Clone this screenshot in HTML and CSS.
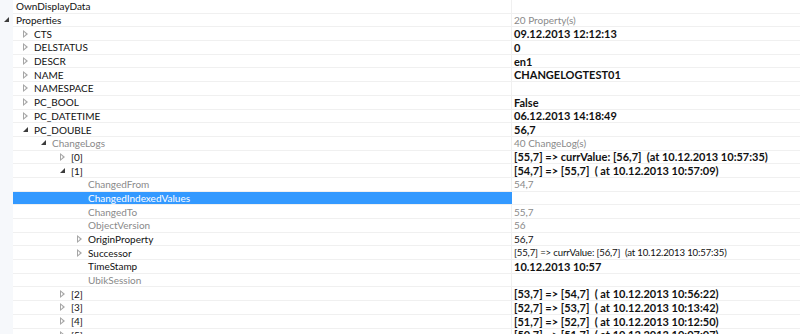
FILE: index.html
```html
<!DOCTYPE html>
<html lang="de">
<head>
  <meta charset="UTF-8">
  <title>OwnDisplayData</title>
  <link rel="stylesheet" href="styles.css">
</head>
<body>
  <div class="grid-view">
    <!-- linke Randspalte -->
    <div class="gutter"></div>

    <div class="rows">
      <div class="row lvl0"><div class="name"><span class="exp"></span>OwnDisplayData</div><div class="val"></div></div>
      <div class="row lvl0"><div class="name"><span class="exp open"></span>Properties</div><div class="val muted small">20 Property(s)</div></div>
      <div class="row lvl1"><div class="name"><span class="exp closed"></span>CTS</div><div class="val strong">09.12.2013 12:12:13</div></div>
      <div class="row lvl1"><div class="name"><span class="exp closed"></span>DELSTATUS</div><div class="val strong">0</div></div>
      <div class="row lvl1"><div class="name"><span class="exp closed"></span>DESCR</div><div class="val strong">en1</div></div>
      <div class="row lvl1"><div class="name"><span class="exp closed"></span>NAME</div><div class="val strong">CHANGELOGTEST01</div></div>
      <div class="row lvl1"><div class="name"><span class="exp closed"></span>NAMESPACE</div><div class="val"></div></div>
      <div class="row lvl1"><div class="name"><span class="exp closed"></span>PC_BOOL</div><div class="val strong">False</div></div>
      <div class="row lvl1"><div class="name"><span class="exp closed"></span>PC_DATETIME</div><div class="val strong">06.12.2013 14:18:49</div></div>
      <div class="row lvl1"><div class="name"><span class="exp open"></span>PC_DOUBLE</div><div class="val strong">56,7</div></div>
      <div class="row lvl2"><div class="name muted"><span class="exp open"></span>ChangeLogs</div><div class="val muted small">40 ChangeLog(s)</div></div>
      <div class="row lvl3"><div class="name"><span class="exp closed"></span>[0]</div><div class="val strong">[55,7] =&gt; currValue: [56,7]&nbsp; (at 10.12.2013 10:57:35)</div></div>
      <div class="row lvl3"><div class="name"><span class="exp open"></span>[1]</div><div class="val strong">[54,7] =&gt; [55,7]&nbsp; ( at 10.12.2013 10:57:09)</div></div>
      <div class="row lvl4"><div class="name muted"><span class="exp"></span>ChangedFrom</div><div class="val muted small">54,7</div></div>
      <div class="row lvl4 selected"><div class="name"><span class="exp"></span>ChangedIndexedValues</div><div class="val"></div></div>
      <div class="row lvl4"><div class="name muted"><span class="exp"></span>ChangedTo</div><div class="val muted small">55,7</div></div>
      <div class="row lvl4"><div class="name muted"><span class="exp"></span>ObjectVersion</div><div class="val muted small">56</div></div>
      <div class="row lvl4"><div class="name"><span class="exp closed"></span>OriginProperty</div><div class="val small">56,7</div></div>
      <div class="row lvl4"><div class="name"><span class="exp closed"></span>Successor</div><div class="val small tight">[55,7] =&gt; currValue: [56,7]&nbsp; (at 10.12.2013 10:57:35)</div></div>
      <div class="row lvl4"><div class="name"><span class="exp"></span>TimeStamp</div><div class="val strong">10.12.2013 10:57</div></div>
      <div class="row lvl4"><div class="name muted"><span class="exp"></span>UbikSession</div><div class="val"></div></div>
      <div class="row lvl3"><div class="name"><span class="exp closed"></span>[2]</div><div class="val strong">[53,7] =&gt; [54,7]&nbsp; ( at 10.12.2013 10:56:22)</div></div>
      <div class="row lvl3"><div class="name"><span class="exp closed"></span>[3]</div><div class="val strong">[52,7] =&gt; [53,7]&nbsp; ( at 10.12.2013 10:13:42)</div></div>
      <div class="row lvl3"><div class="name"><span class="exp closed"></span>[4]</div><div class="val strong">[51,7] =&gt; [52,7]&nbsp; ( at 10.12.2013 10:12:50)</div></div>
      <div class="row lvl3"><div class="name"><span class="exp closed"></span>[5]</div><div class="val strong">[50,7] =&gt; [51,7]&nbsp; ( at 10.12.2013 10:07:07)</div></div>
    </div>
  </div>
</body>
</html>
```

FILE: styles.css
```css
* {
  margin: 0;
  padding: 0;
  box-sizing: border-box;
}
body {
  font-family: Lato, "Liberation Sans", sans-serif;
  font-size: 10px;
  color: #111;
  background: #fff;
  overflow: hidden;
}
.grid-view {
  display: flex;
  height: 334px;
}
/* Randspalte links */
.gutter {
  width: 13px;
  flex: none;
  background: #f6f8fb;
}
.rows {
  flex: 1;
}
.row {
  display: grid;
  grid-template-columns: 499px 1fr;
  height: 13.7px;
  border-bottom: 1px solid #f0f0f0;
}
.name,
.val {
  display: flex;
  align-items: center;
  white-space: nowrap;
}
.name {
  border-right: 1px solid #f0f0f0;
  padding-left: 3px;
}
.val {
  padding-left: 2px;
  overflow: hidden;
}
/* Einrueckung je Ebene */
.lvl1 .name { padding-left: 9px; }
.lvl2 .name { padding-left: 27px; }
.lvl3 .name { padding-left: 46px; }
.lvl4 .name { padding-left: 63px; }

.exp {
  width: 12px;
  height: 8px;
  flex: none;
  position: relative;
}
.lvl0 .exp {
  margin-left: -13px;
  margin-right: 1px;
}
/* zugeklappt: leeres Dreieck */
.exp.closed::before {
  content: "";
  position: absolute;
  left: 1px;
  top: 0;
  border-style: solid;
  border-width: 4px 0 4px 5px;
  border-color: transparent transparent transparent #a6a6a6;
}
.exp.closed::after {
  content: "";
  position: absolute;
  left: 2px;
  top: 2px;
  border-style: solid;
  border-width: 2px 0 2px 2.5px;
  border-color: transparent transparent transparent #fff;
}
/* aufgeklappt: gefuelltes Dreieck */
.exp.open::before {
  content: "";
  position: absolute;
  left: 1px;
  top: 1px;
  border-style: solid;
  border-width: 0 0 5px 5px;
  border-color: transparent transparent #3c3c3c transparent;
}
.muted {
  color: #8a8a8a;
}
.strong {
  font-weight: bold;
  font-size: 11px;
}
.small {
  font-size: 10px;
}
.tight {
  font-size: 9.6px;
  letter-spacing: -0.15px;
}
.selected .name {
  background: #3399ff;
  color: #fff;
  border-right-color: #3399ff;
}
```
